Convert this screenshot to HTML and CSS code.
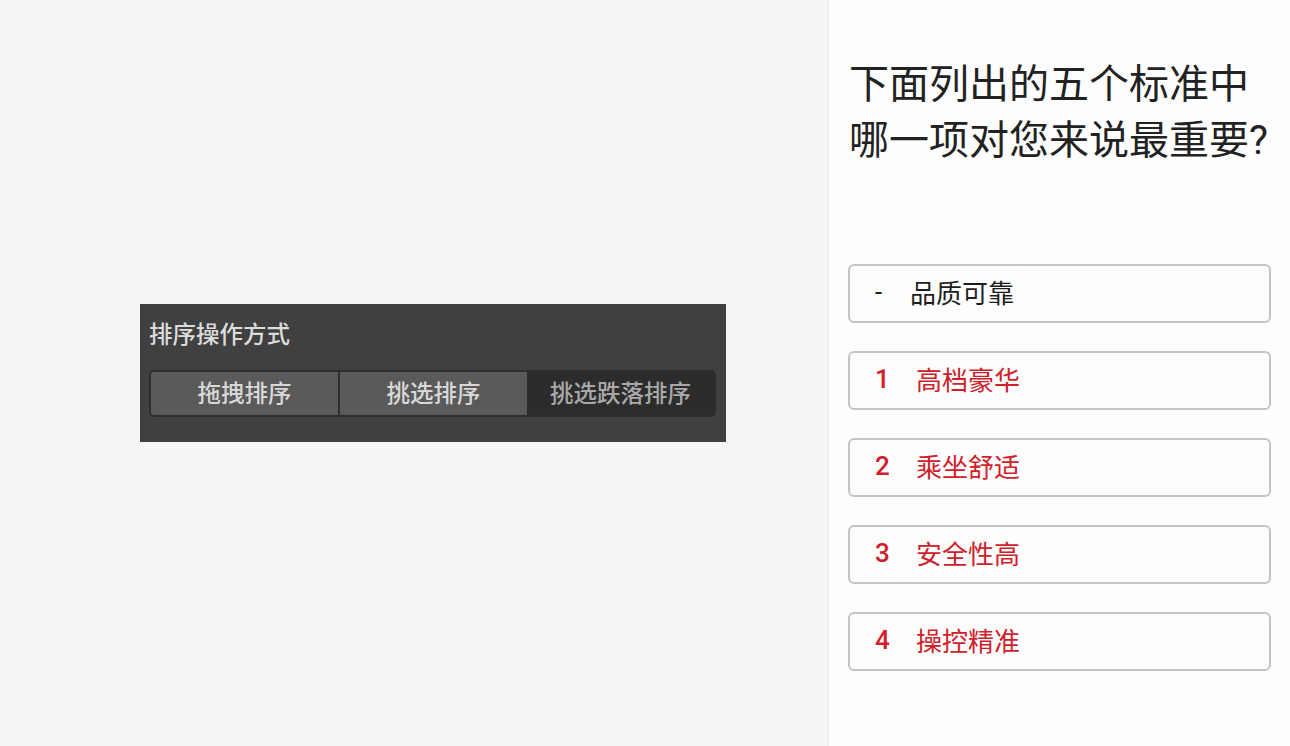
FILE: index.html
```html
<!DOCTYPE html>
<html lang="zh-CN">
<head>
    <meta charset="UTF-8">
    <meta name="viewport" content="width=device-width, initial-scale=1.0">
    <title>排序操作方式</title>
    <link rel="stylesheet" href="styles.css">
</head>
<body>

    <div class="stage">
        <div class="settings">
            <div class="settings-title">排序操作方式</div>
            <div class="segmented">
                <div class="segment">拖拽排序</div>
                <div class="segment">挑选排序</div>
                <div class="segment active">挑选跌落排序</div>
            </div>
        </div>
    </div>

    <div class="panel">
        <h2 class="question">下面列出的五个标准中哪一项对您来说最重要?</h2>

        <div class="options">
            <div class="option">
                <span class="rank rank-none">-</span>
                <span class="label">品质可靠</span>
            </div>
            <div class="option picked">
                <span class="rank">1</span>
                <span class="label">高档豪华</span>
            </div>
            <div class="option picked">
                <span class="rank">2</span>
                <span class="label">乘坐舒适</span>
            </div>
            <div class="option picked">
                <span class="rank">3</span>
                <span class="label">安全性高</span>
            </div>
            <div class="option picked">
                <span class="rank">4</span>
                <span class="label">操控精准</span>
            </div>
        </div>
    </div>

</body>
</html>
```

FILE: styles.css
```css
html, body {
    height: 100%;
}

body {
    margin: 0;
    display: flex;
    font-family: Roboto, "Noto Sans CJK SC", sans-serif;
    background-color: #f5f5f5;
    overflow: hidden;
}

.stage {
    width: 829px;
    padding-left: 140px;
    padding-top: 304px;
    box-sizing: border-box;
}

.settings {
    width: 586px;
    height: 138px;
    background-color: #404040;
    padding: 15px 10px 0 9px;
    box-sizing: border-box;
}

.settings-title {
    color: #dcdcdc;
    font-size: 23.5px;
    font-weight: 500;
    line-height: 32px;
    margin-bottom: 19px;
}

.segmented {
    display: flex;
    height: 47px;
    border: 2px solid #2e2e2e;
    border-radius: 5px;
    background-color: #2e2e2e;
    box-sizing: border-box;
    overflow: hidden;
}

.segment {
    flex: 1;
    display: flex;
    align-items: center;
    justify-content: center;
    padding-bottom: 3px;
    background-color: #5a5a5a;
    color: #d8d8d8;
    font-size: 23.5px;
    font-weight: 500;
}

.segment + .segment {
    margin-left: 2px;
}

.segment.active {
    background-color: #2c2c2c;
    color: #a8a8a8;
    margin-left: 0;
}

.panel {
    flex: 1;
    background-color: #fdfdfd;
    box-shadow: -1px 0 3px rgba(0, 0, 0, 0.06);
    padding: 57px 19px 0 19px;
}

.question {
    margin: 0 0 95px 1px;
    font-weight: normal;
    font-size: 40px;
    line-height: 56px;
    color: #222;
}

.options {
    display: flex;
    flex-direction: column;
    gap: 28px;
}

.option {
    display: flex;
    align-items: center;
    height: 59px;
    border: 2px solid #c4c4c4;
    border-radius: 6px;
    padding-left: 25px;
    padding-bottom: 4px;
    box-sizing: border-box;
    font-size: 26px;
    color: #1e1e1e;
}

.rank {
    width: 41px;
    font-size: 26px;
}

.rank-none {
    width: 35px;
}

.option.picked {
    color: #d0202a;
}

.option.picked .rank {
    font-weight: 500;
}
```
